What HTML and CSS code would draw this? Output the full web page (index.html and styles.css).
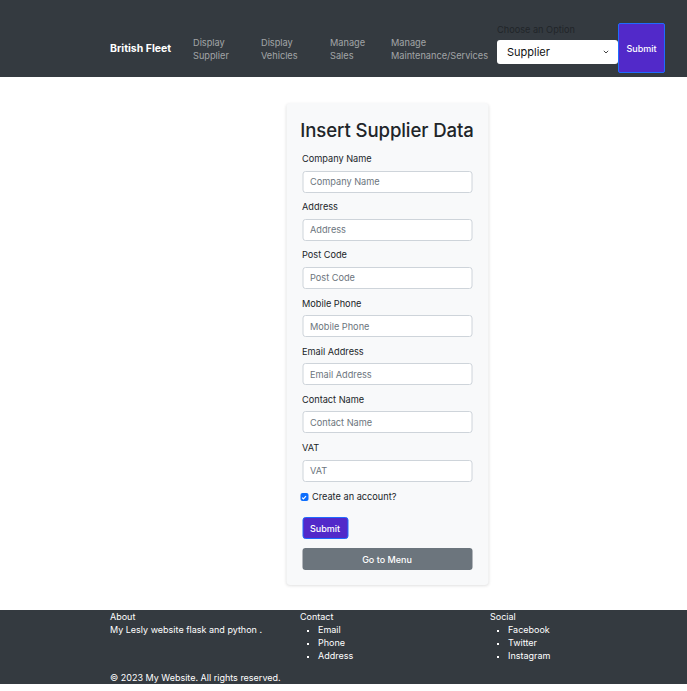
FILE: index.html
```html
<!DOCTYPE html>
<html>
<head>
<meta charset="utf-8">
<link rel="stylesheet" href="styles.css">
</head>
<body>
<nav class="navbar">
  <a class="brand">British Fleet</a>
  <ul class="nav-links">
    <li class="l1">Display<br>Supplier</li>
    <li class="l2">Display<br>Vehicles</li>
    <li class="l3">Manage<br>Sales</li>
    <li class="l4">Manage<br>Maintenance/Services</li>
  </ul>
  <form class="nav-form">
    <div class="choose">
      <label class="choose-label">Choose an Option</label>
      <div class="select">
        <span>Supplier</span>
        <svg width="8" height="6" viewBox="0 0 8 6"><path d="M1.8 1.8 L4 4 L6.2 1.8" fill="none" stroke="#444" stroke-width="1"/></svg>
      </div>
    </div>
    <button class="nav-submit" type="button">Submit</button>
  </form>
</nav>

<main class="main">
  <div class="card">
    <h1 class="title">Insert Supplier Data</h1>
    <div class="field"><label>Company Name</label><div class="input">Company Name</div></div>
    <div class="field"><label>Address</label><div class="input">Address</div></div>
    <div class="field"><label>Post Code</label><div class="input">Post Code</div></div>
    <div class="field"><label>Mobile Phone</label><div class="input">Mobile Phone</div></div>
    <div class="field"><label>Email Address</label><div class="input">Email Address</div></div>
    <div class="field"><label>Contact Name</label><div class="input">Contact Name</div></div>
    <div class="field"><label>VAT</label><div class="input">VAT</div></div>
    <div class="check">
      <span class="box"><svg width="7" height="7" viewBox="0 0 8 8"><path d="M1.8 4.2 L3.3 5.6 L6.3 2.4" fill="none" stroke="#fff" stroke-width="1.3"/></svg></span>
      <span>Create an account?</span>
    </div>
    <button class="btn-submit" type="button">Submit</button>
    <button class="btn-menu" type="button">Go to Menu</button>
  </div>
</main>

<footer class="footer">
  <div class="cols">
    <div class="col">
      <div class="head">About</div>
      <div>My Lesly website flask and python .</div>
    </div>
    <div class="col">
      <div class="head">Contact</div>
      <ul><li>Email</li><li>Phone</li><li>Address</li></ul>
    </div>
    <div class="col">
      <div class="head">Social</div>
      <ul><li>Facebook</li><li>Twitter</li><li>Instagram</li></ul>
    </div>
  </div>
  <div class="copy">© 2023 My Website. All rights reserved.</div>
</footer>
</body>
</html>
```

FILE: styles.css
```css
* { box-sizing: border-box; }
body {
  margin: 0;
  font-family: Inter, "Noto Sans", "Liberation Sans", sans-serif;
  color: #212529;
  background: #fff;
}
.navbar {
  height: 77px;
  background: #343a40;
  display: flex;
  align-items: center;
  padding: 19px 0 0 110px;
}
.brand {
  color: #fff;
  font-weight: 700;
  font-size: 10.5px;
  width: 83px;
}
.nav-links {
  list-style: none;
  margin: 0;
  padding: 0;
  display: flex;
  font-size: 9.2px;
  line-height: 13px;
  color: rgba(255,255,255,0.55);
}
.nav-links li { padding-top: 1px; }
.l1 { width: 68px; }
.l2 { width: 69px; }
.l3 { width: 61px; }
.l4 { width: 106px; }
.nav-form {
  display: flex;
  align-items: center;
}
.choose {
  display: flex;
  flex-direction: column;
  margin-bottom: 8px;
}
.choose-label {
  font-size: 9.2px;
  color: #212529;
  line-height: 12px;
  margin-bottom: 4px;
}
.select {
  width: 121px;
  height: 24px;
  background: #fff;
  border-radius: 3px;
  display: flex;
  align-items: center;
  justify-content: space-between;
  padding: 0 8px 0 10px;
  font-size: 11px;
  color: #111;
}
.nav-submit {
  width: 47px;
  height: 50px;
  background: #5229c9;
  border: 1px solid #1f6bff;
  border-radius: 2px;
  color: #fff;
  font-family: inherit;
  font-size: 9px;
  font-weight: 500;
  padding: 0;
}
.main {
  display: flex;
  justify-content: center;
  padding: 26px 0 25px;
}
.card {
  width: 202px;
  transform: translateX(43.5px);
  background: #f8f9fa;
  border-radius: 4px;
  box-shadow: 0 1px 3px rgba(0,0,0,0.12);
  padding: 15px 16px 15px;
  display: flex;
  flex-direction: column;
}
.title {
  margin: 0 -8px 11px;
  font-size: 18.6px;
  font-weight: 500;
  text-align: center;
  line-height: 24px;
  white-space: nowrap;
  letter-spacing: -0.1px;
}
.field {
  display: flex;
  flex-direction: column;
  margin-bottom: 8.7px;
}
.field label {
  font-size: 9.2px;
  line-height: 11.5px;
  margin-bottom: 6px;
}
.input {
  height: 22px;
  background: #fff;
  border: 1px solid #ced4da;
  border-radius: 3px;
  font-size: 9.2px;
  color: #6c757d;
  padding: 0 7px;
  display: flex;
  align-items: center;
}
.check {
  display: flex;
  align-items: center;
  font-size: 9.2px;
  line-height: 12px;
  margin-top: 1px;
  margin-left: -2px;
  gap: 4px;
}
.box {
  width: 8px;
  height: 8px;
  background: #0d6efd;
  border-radius: 2px;
  display: flex;
  align-items: center;
  justify-content: center;
}
.btn-submit {
  margin-top: 14px;
  width: 46px;
  height: 22px;
  background: #5229c9;
  border: 1px solid #1f6bff;
  border-radius: 3px;
  color: #fff;
  font-family: inherit;
  font-size: 9px;
  font-weight: 500;
  padding: 0;
}
.btn-menu {
  margin-top: 9px;
  width: 100%;
  height: 22px;
  background: #6c757d;
  border: none;
  border-radius: 3px;
  color: #fff;
  font-family: inherit;
  font-size: 9px;
  font-weight: 500;
  padding: 0;
}
.footer {
  background: #343a40;
  color: #fff;
  font-size: 9px;
  line-height: 13px;
  padding: 0 0 0 110px;
}
.cols { display: flex; }
.col { width: 190px; }
.col ul {
  margin: 0;
  padding-left: 18px;
  list-style: square;
}
.col li::marker { font-size: 7px; }
.copy { margin-top: 9px; }
```
